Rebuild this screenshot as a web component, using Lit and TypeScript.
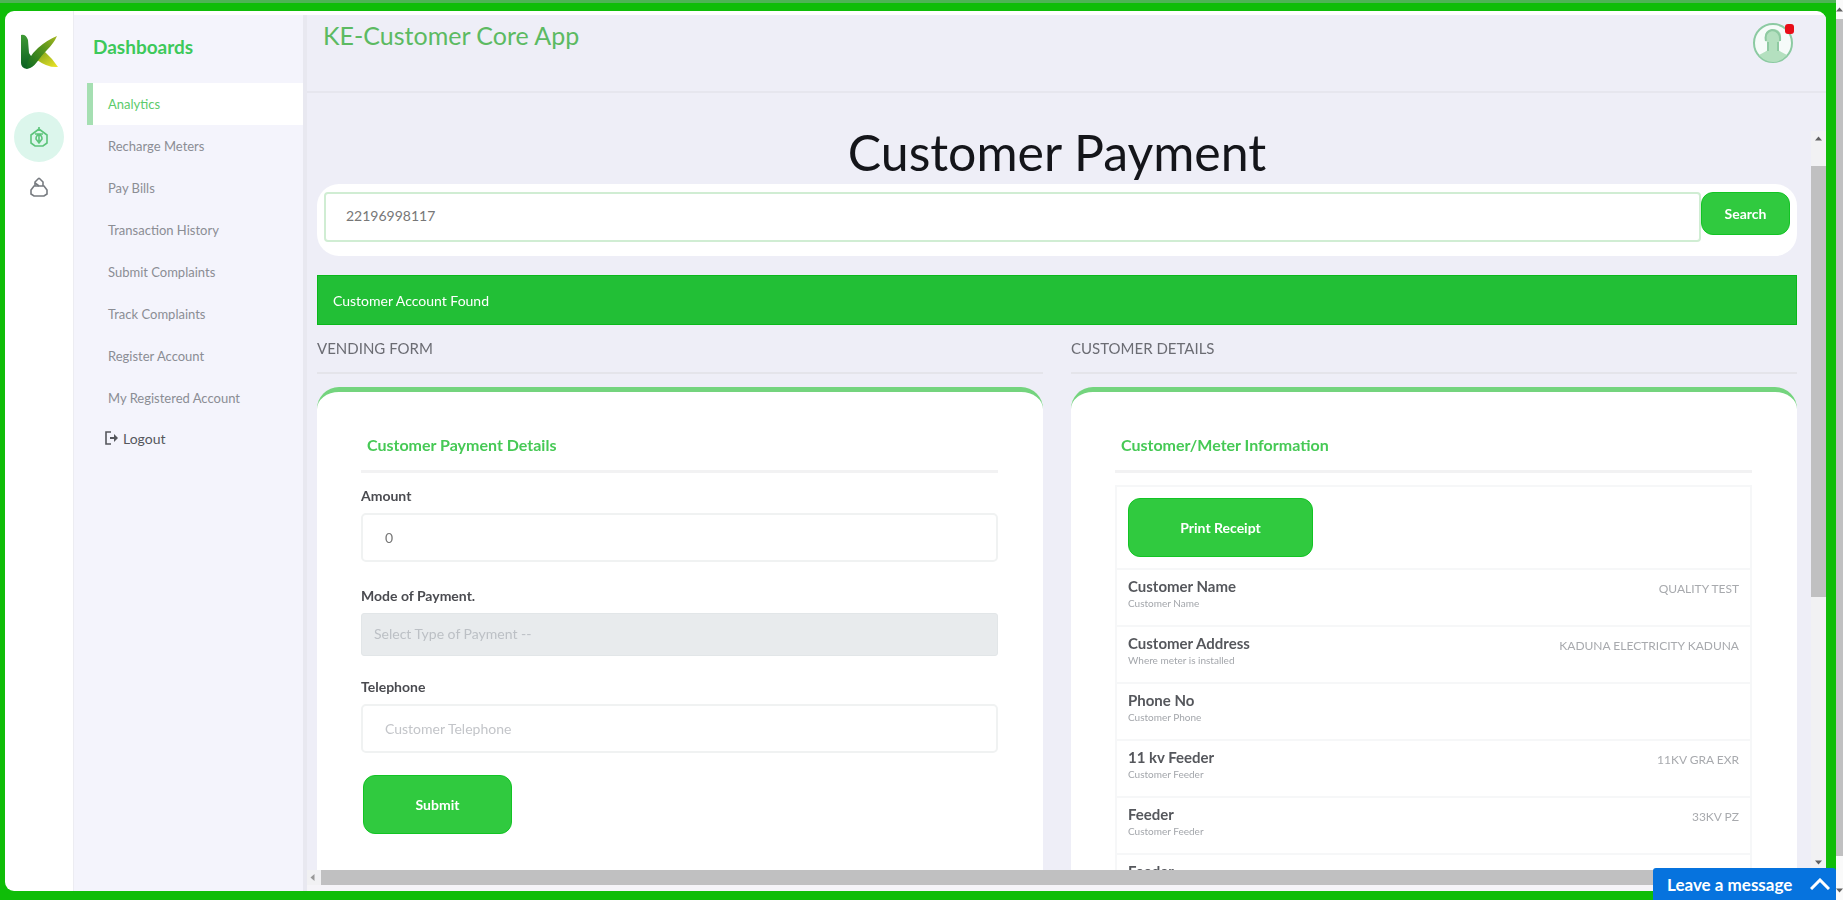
import { LitElement, html, css } from "lit";
import { customElement } from "lit/decorators.js";
import { classMap } from "lit/directives/class-map.js";

const FONT = css`"Lato", "Noto Sans", sans-serif`;

@customElement("side-rail")
class SideRail extends LitElement {
  static styles = css`
    :host { display: flex; flex-direction: column; align-items: center; width: 69px; padding-top: 22px; box-sizing: border-box; border-right: 1px solid #ececf2; }
    .logo { width: 40px; height: 38px; margin-bottom: 41px; }
    .item { width: 50px; height: 50px; border-radius: 50%; display: grid; place-items: center; color: #777b80; }
    .item.active { background: #dcf6ec; color: #5cc47a; }
    .item svg { width: 22px; height: 22px; }
  `;
  render() {
    return html`
      <svg class="logo" viewBox="0 0 40 38" role="img" aria-label="KE">
        <defs>
          <linearGradient id="stem" x1="0" y1="0" x2="0" y2="1"><stop offset="0" stop-color="#3f9a35" /><stop offset="1" stop-color="#0b5f22" /></linearGradient>
          <linearGradient id="arm" x1="1" y1="0" x2="0" y2="1"><stop offset="0" stop-color="#a8b820" /><stop offset=".4" stop-color="#58951c" /><stop offset="1" stop-color="#0c6a22" /></linearGradient>
          <linearGradient id="leg" x1="0" y1="0" x2="1" y2="1"><stop offset="0" stop-color="#7fa31c" /><stop offset="1" stop-color="#f0e628" /></linearGradient>
        </defs>
        <path d="M18 22 L26 19 Q33 25 39 34 Q29 35 18 27 Z" fill="url(#leg)" />
        <path d="M2 2 Q7 1 9 7 L10 20 L14 26 Q12 35 8 36 Q2 35 2 30 Z" fill="url(#stem)" />
        <path d="M7 35 Q9 24 19 15 Q28 7 38 3 Q35 10 28 17 Q23 22 18 29 Q12 37 7 35 Z" fill="url(#arm)" />
      </svg>
      <a class="item active" href="#dashboards" aria-label="Dashboards">
        <svg viewBox="0 0 22 22" fill="none" stroke="currentColor" stroke-width="1.6"><path d="M11 1v4M11 3 3 9v8l4 3h8l4-3V9z" /><path d="M8 13q0-4 3-4t3 4l-3 4zM7 8h8M11 9v8" /></svg>
      </a>
      <a class="item" href="#account" aria-label="Account">
        <svg viewBox="0 0 22 22" fill="none" stroke="currentColor" stroke-width="1.6"><path d="M11 2 7 6v4M11 2l4 4v4" /><path d="M6 10h10l3 4v4l-3 2H6l-3-2v-4z" /><path d="M7 7l4 3" /></svg>
      </a>
    `;
  }
}

@customElement("side-menu")
class SideMenu extends LitElement {
  static styles = css`
    :host { display: block; width: 229px; box-sizing: border-box; background: #f4f4fc; margin-top: 4px; padding-left: 13px; font-family: ${FONT}; }
    h2 { margin: 0; padding: 20px 0 24px 6px; font-size: 19px; line-height: 24px; font-weight: 700; color: #3dc95a; }
    a { display: flex; align-items: center; height: 42px; padding-left: 15px; border-left: 6px solid transparent; box-sizing: border-box; font-size: 13px; color: #8b8d94; text-decoration: none; }
    a.active { background: #fff; border-left-color: #a5dfb2; color: #5ccb6b; }
    a.logout { height: 38px; padding-left: 12px; gap: 4px; font-size: 14px; color: #55575c; }
    a.logout svg { width: 14px; height: 14px; }
  `;
  items = ["Analytics", "Recharge Meters", "Pay Bills", "Transaction History", "Submit Complaints", "Track Complaints", "Register Account", "My Registered Account"];
  render() {
    return html`
      <h2>Dashboards</h2>
      <nav>
        ${this.items.map((t, i) => html`<a href="#" class=${classMap({ active: i === 0 })}>${t}</a>`)}
        <a href="#logout" class="logout">
          <svg viewBox="0 0 14 14" fill="none" stroke="currentColor" stroke-width="1.6"><path d="M6 1H1v12h5" /><path d="M5 6h4V3l4 4-4 4V8H5z" fill="currentColor" stroke="none" /></svg>
          Logout
        </a>
      </nav>
    `;
  }
}

@customElement("top-bar")
class TopBar extends LitElement {
  static styles = css`
    :host { display: flex; justify-content: space-between; align-items: flex-start; box-sizing: border-box; height: 78px; padding: 7px 32px 0 16px; border-bottom: 2px solid #e6e6ee; font-family: ${FONT}; }
    h1 { margin: 0; font-size: 25px; line-height: 26px; font-weight: 400; color: #5cba62; }
    button { position: relative; width: 42px; height: 42px; margin: 0; padding: 0; border: 0; background: none; }
    button svg { width: 42px; height: 42px; display: block; }
    .dot { position: absolute; right: 0; top: 2px; width: 9px; height: 10px; border-radius: 3px; background: #e80c17; }
  `;
  render() {
    return html`
      <h1>KE-Customer Core App</h1>
      <button aria-label="Profile">
        <svg viewBox="0 0 42 42"><circle cx="21" cy="21" r="19" fill="#f6fbf9" stroke="#8ccaa2" stroke-width="2" /><path d="M7 33q6-3 9-5V22q-3-4-3-8 1-7 8-7t8 7q0 4-3 8v6q3 2 9 5-6 7-14 7T7 33z" fill="#b4e0bf" /><path d="M14 19q-2-9 6-11 9 1 8 11M16 20v9M26 20v9" fill="none" stroke="#8fcaa2" stroke-width="2" /></svg>
        <span class="dot"></span>
      </button>
    `;
  }
}

@customElement("scroll-bar")
class ScrollBar extends LitElement {
  static styles = css`
    :host { display: flex; align-items: center; background: #f1f1f3; }
    :host([kind="v"]) { flex-direction: column; width: 15px; }
    :host([kind="h"]) { height: 15px; }
    :host([kind="page"]) { flex-direction: column; width: 7px; background: #fafafa; }
    svg { width: 7px; height: 7px; flex: none; color: #606060; }
    .thumb { background: #c0c0c1; }
    .track { flex: 1; }
    :host([kind="v"]) .thumb { width: 100%; height: 431px; margin-top: 20px; }
    :host([kind="v"]) svg { margin: 4px 0; }
    :host([kind="h"]) svg { margin: 0 5px 0 2px; color: #999; }
    :host([kind="h"]) .thumb { flex: 1; height: 100%; }
    :host([kind="page"]) .thumb { width: 100%; flex: 1; }
    :host([kind="page"]) svg { margin: 6px 0; }
    :host([kind="page"]) svg.end { margin: 31px 0 6px; }
  `;
  static properties = { kind: { type: String, reflect: true } };
  declare kind: string;
  render() {
    const up = html`<svg viewBox="0 0 7 7"><path d="M0 5.5 3.5 1.5 7 5.5z" fill="currentColor" /></svg>`;
    const left = html`<svg viewBox="0 0 7 7"><path d="M5.5 0 1.5 3.5 5.5 7z" fill="currentColor" /></svg>`;
    const down = html`<svg class="end" viewBox="0 0 7 7"><path d="M0 1.5 3.5 5.5 7 1.5z" fill="currentColor" /></svg>`;
    if (this.kind === "h") return html`${left}<div class="thumb"></div>`;
    if (this.kind === "v") return html`${up}<div class="thumb"></div><div class="track"></div>${down}`;
    return html`${up}<div class="thumb"></div>${down}`;
  }
}

@customElement("payment-page")
class PaymentPage extends LitElement {
  static styles = css`
    :host { display: block; box-sizing: border-box; padding: 31px 14px 0 10px; overflow: hidden; font-family: ${FONT}; color: #555; }
    * { box-sizing: border-box; }
    h1 { margin: 0 0 4px; font-size: 50px; line-height: 56px; font-weight: 400; text-align: center; color: #14151a; }
    input, select, button { font-family: inherit; }
    input, select { width: 100%; outline: none; }
    .search { display: flex; align-items: flex-start; height: 72px; padding: 8px 7px; border-radius: 22px; background: #fff; }
    .search input { flex: 1; height: 50px; border: 2px solid #d0edd3; border-radius: 4px; padding: 0 20px 4px; font-size: 14px; color: #777; }
    .btn { border: 1px solid #12c424; border-radius: 12px; background: #30ca3f; color: #fff; font-size: 14px; font-weight: 700; padding: 0; }
    .btn.find { width: 89px; height: 43px; }
    .btn.submit { width: 149px; height: 59px; margin: 22px 0 40px 2px; }
    .btn.print { display: block; width: 185px; height: 59px; }
    .alert { margin-top: 19px; height: 50px; padding-left: 15px; display: flex; align-items: center; background: #22bf36; border: 1px solid #0ab81b; color: #fff; font-size: 14px; }
    .cols { display: grid; grid-template-columns: 1fr 1fr; gap: 28px; }
    h2 { margin: 0 0 13px; padding: 14px 0 15px; border-bottom: 2px solid #e4e4ea; font-size: 15px; line-height: 18px; font-weight: 400; color: #6b6c73; }
    .card { min-height: 600px; background: #fff; border-top: 5px solid #74d47e; border-radius: 22px 22px 0 0; padding: 40px 45px 0 44px; }
    h3 { margin: 0; padding: 1px 6px 13px; line-height: 24px; font-size: 16px; font-weight: 700; color: #46c955; border-bottom: 3px solid #f2f2f3; }
    .card label { display: block; font-size: 14px; line-height: 18px; margin-bottom: 8px; color: #4a4b50; font-weight: 700; }
    .card input { height: 49px; border: 2px solid #f0f2f2; border-radius: 5px; padding: 0 22px; font-size: 14px; color: #777; background: #fff; }
    .card input::placeholder { color: #c3c5c9; opacity: 1; }
    .card select { height: 43px; border: 1px solid #e2e6e8; border-radius: 3px; padding: 0 12px 2px; background: #e8ebed; color: #bcc0c5; font-size: 14px; appearance: none; opacity: 1; }
    .amount { margin-top: 14px; }
    .mode { margin-top: 25px; }
    .tel { margin-top: 22px; }
    table { width: 100%; margin-top: 12px; border-collapse: collapse; border: 2px solid #f6f7f8; border-bottom: 0; }
    td { border-top: 2px solid #f6f7f8; padding: 0 11px; vertical-align: top; height: 57px; }
    tr.top td { height: 83px; padding-top: 11px; }
    .name { font-size: 15px; line-height: 18px; margin-top: 7px; color: #55575c; font-weight: 700; }
    .sub { font-size: 10px; line-height: 16px; color: #a3a6ab; }
    .val { text-align: right; font-size: 12px; line-height: 18px; padding-top: 10px; color: #a8aaae; }
  `;
  rows = [
    ["Customer Name", "Customer Name", "QUALITY TEST"],
    ["Customer Address", "Where meter is installed", "KADUNA ELECTRICITY KADUNA"],
    ["Phone No", "Customer Phone", ""],
    ["11 kv Feeder", "Customer Feeder", "11KV GRA EXR"],
    ["Feeder", "Customer Feeder", "33KV PZ"],
    ["Feeder", "Customer Feeder", ""],
  ];
  firstUpdated() {
    const box = this.renderRoot.querySelector<HTMLInputElement>(".search input");
    box?.focus();
    box?.setSelectionRange(box.value.length, box.value.length);
  }
  render() {
    return html`
      <h1>Customer Payment</h1>
      <div class="search">
        <input aria-label="Account number" .value=${"22196998117"} />
        <button class="btn find">Search</button>
      </div>
      <div class="alert" role="status">Customer Account Found</div>
      <div class="cols">
        <section>
          <h2>VENDING FORM</h2>
          <div class="card">
            <h3>Customer Payment Details</h3>
            <div class="amount"><label for="amount">Amount</label><input id="amount" .value=${"0"} /></div>
            <div class="mode"><label for="mode">Mode of Payment.</label><select id="mode" disabled><option>Select Type of Payment --</option></select></div>
            <div class="tel"><label for="tel">Telephone</label><input id="tel" type="tel" placeholder="Customer Telephone" /></div>
            <button class="btn submit">Submit</button>
          </div>
        </section>
        <section>
          <h2>CUSTOMER DETAILS</h2>
          <div class="card">
            <h3>Customer/Meter Information</h3>
            <table>
              <tr class="top"><td colspan="2"><button class="btn print">Print Receipt</button></td></tr>
              ${this.rows.map(([n, s, v]) => html`<tr><td><div class="name">${n}</div><div class="sub">${s}</div></td><td class="val">${v}</td></tr>`)}
            </table>
          </div>
        </section>
      </div>
    `;
  }
}

@customElement("app-root")
class AppRoot extends LitElement {
  static styles = css`
    :host { display: flex; height: 100vh; overflow: hidden; font-family: ${FONT}; background: #0fbd08; }
    .frame { flex: 1; min-width: 0; display: flex; box-sizing: border-box; border-top: 3px solid #4fb355; padding: 8px 10px 9px 5px; }
    .window { flex: 1; min-width: 0; display: flex; background: #fff; border-radius: 9px; overflow: hidden; }
    .main { flex: 1; min-width: 0; display: flex; flex-direction: column; margin-top: 4px; border-left: 4px solid #e8e8f0; background: #eeeef7; }
    .view { flex: 1; min-height: 0; display: flex; }
    payment-page { flex: 1; min-width: 0; }
    .vscroll { margin-top: 38px; }
    .foot { background: #f5f4f8; padding-bottom: 6px; }
    .chat { position: absolute; right: 7px; bottom: 0; width: 183px; height: 32px; display: flex; align-items: center; justify-content: space-between; padding: 0 6px 0 14px; border: 0; border-radius: 3px 3px 0 0; background: #0673de; color: #fff; font-family: ${FONT}; font-size: 17px; font-weight: 700; white-space: nowrap; }
    .chat svg { width: 20px; height: 12px; }
  `;
  render() {
    return html`
      <div class="frame">
        <div class="window">
          <side-rail></side-rail>
          <side-menu></side-menu>
          <div class="main">
            <top-bar></top-bar>
            <div class="view">
              <payment-page></payment-page>
              <scroll-bar class="vscroll" kind="v"></scroll-bar>
            </div>
            <div class="foot"><scroll-bar kind="h"></scroll-bar></div>
          </div>
        </div>
      </div>
      <scroll-bar kind="page"></scroll-bar>
      <button class="chat">Leave a message
        <svg viewBox="0 0 20 12" fill="none" stroke="#fff" stroke-width="3"><path d="M1 11 10 2l9 9" /></svg>
      </button>
    `;
  }
}
